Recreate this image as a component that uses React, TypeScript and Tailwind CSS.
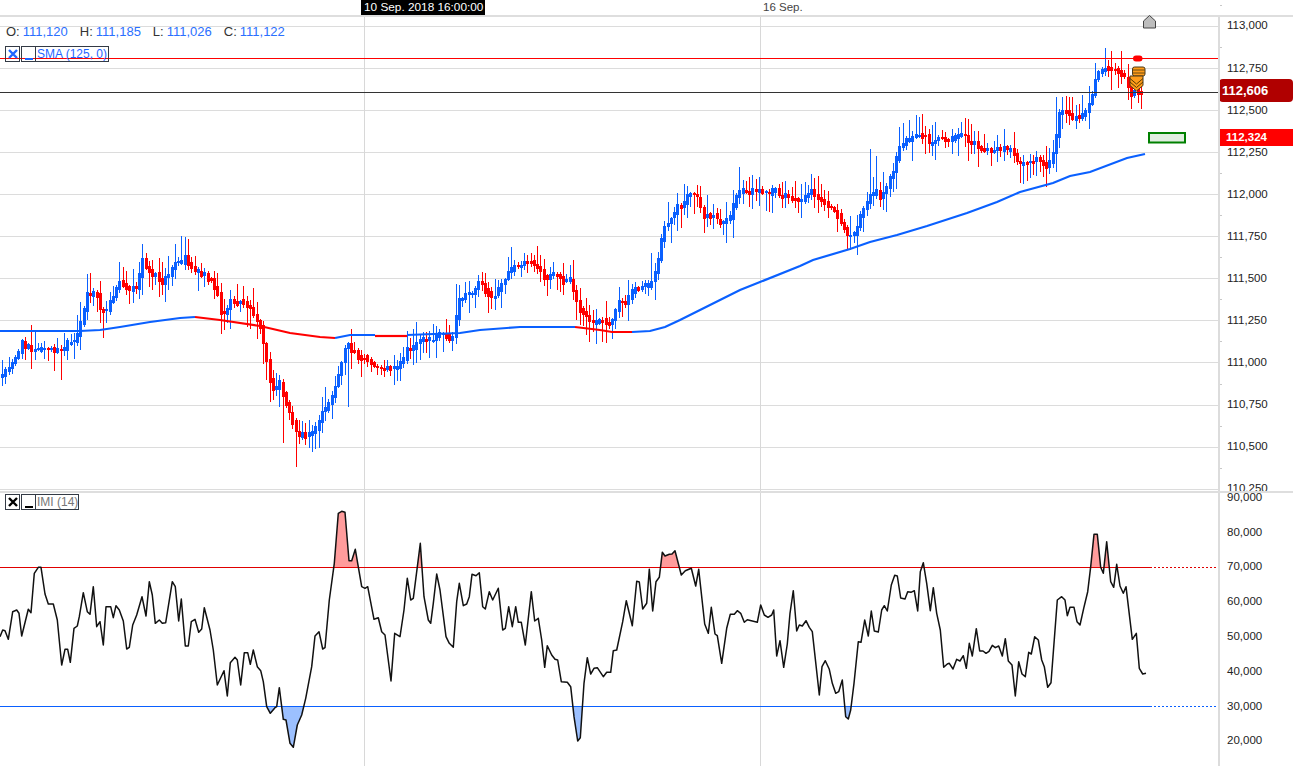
// traced from the chart: [x, y] of the close price in page pixels
const closeTrace: number[] = [
  2,376, 8,368, 15,358, 21,345, 27,344, 33,351, 42,348, 50,350, 62,352, 68,343, 75,343, 82,317, 87,293, 97,295, 100,310, 107,310,
  112,297, 119,283, 127,288, 137,287, 142,262, 147,270, 155,275, 163,283, 173,265, 182,263, 185,257, 192,270, 200,273, 210,278,
  217,293, 222,317, 230,303, 240,302, 248,307, 258,320, 263,343, 267,367, 273,390, 280,383, 287,407, 293,427, 300,436, 308,433,
  315,430, 322,413, 330,402, 337,380, 343,353, 347,347, 353,353, 363,358, 373,367, 383,368, 397,367, 407,350, 413,347, 420,342,
  433,340, 440,333, 453,340, 458,303, 463,297, 472,293, 480,280, 485,290, 493,300, 498,288, 507,275, 513,267, 530,260, 537,268,
  543,278, 553,275, 563,280, 570,279, 575,300, 582,313, 592,323, 600,322, 610,327, 613,320, 617,303, 625,302, 632,293, 638,288,
  648,283, 655,275, 660,247, 663,227, 670,222, 677,207, 683,207, 687,198, 692,192, 698,200, 703,217, 712,215, 722,225, 730,218,
  735,197, 740,192, 747,192, 758,190, 767,195, 775,192, 787,197, 798,202, 810,190, 820,200, 832,210, 842,223, 848,238, 856,230,
  862,210, 870,197, 875,190, 880,200, 885,187, 892,177, 898,147, 905,143, 912,137, 920,133, 930,143, 940,137, 950,140, 963,133,
  970,143, 980,148, 990,152, 1003,147, 1012,150, 1017,163, 1027,165, 1037,157, 1047,167, 1055,147, 1058,113, 1065,113, 1073,118,
  1087,113, 1093,93, 1096,75, 1105,67, 1113,68, 1123,73, 1131,93, 1143,92,
]

// long wicks that stand out: [x, top, bottom], 0 = keep generated
const longWicks: number[][] = [
  [61,0,380],[87,274,0],[103,0,338],[142,244,0],[181,236,0],[185,237,0],[221,0,334],[283,0,443],[296,0,467],[343,322,0],[348,0,407],
  [457,284,0],[508,257,0],[590,0,342],[650,253,0],[654,0,300],[668,202,0],[740,167,0],[848,0,250],[871,149,0],[875,156,0],
  [1047,0,187],[1057,97,0],[1061,97,0],[1106,48,0],[1110,51,0],[1132,0,109],[1136,0,107],
]

const sma: { color: string; pts: string }[] = [
  { color: '#0a60ff', pts: '0,331 80,331 100,330 120,327 150,322 180,318 195,317' },
  { color: '#ff0000', pts: '195,317 220,320 260,326 290,333 320,337 335,338' },
  { color: '#0a60ff', pts: '335,338 350,335 375,335' },
  { color: '#ff0000', pts: '375,336 407,336' },
  { color: '#0a60ff', pts: '407,335 460,333 480,330 520,327 575,327' },
  { color: '#ff0000', pts: '575,327 600,330 612,332 632,332' },
  { color: '#0a60ff', pts: '632,332 650,331 665,327 680,320 700,310 740,290 760,282 800,266 813,260 850,249 870,242 897,235 927,226 967,213 997,202 1020,192 1053,183 1070,176 1090,172 1127,158 1145,154' },
]

// IMI line, read from three 3x crops: [zoomed x, zoomed y] pairs
const imiA = [0,470,8,450,15,452,25,478,38,395,50,390,57,400,65,468,85,388,93,398,103,280,115,262,123,262,135,342,145,372,160,372,172,420,185,555,195,508,203,508,211,547,222,445,232,438,238,410,250,338,262,395,270,403,280,320,290,440,300,425,310,495,318,380,332,380,340,413,348,377,358,390,370,423,380,507,388,502,398,435,410,405,426,350,438,408,448,305,457,345,466,430,478,420,487,430,497,428,517,305,526,320,536,423,544,357,556,498,565,498,574,425,585,418,596,457,605,447,613,383,630,450,640,510,652,615,672,572,682,648,691,548,705,532,712,540,722,615,733,518,743,518,751,553,760,510,772,560,782,572,790,605,800,680,811,700,825,683,830,680,838,623,850,718,858,720,870,790,880,802,892,735,905,705,917,655,935,560,945,468,957,455,968,507,975,503,988,360,1003,250,1015,100,1025,94,1035,97,1047,242,1055,242,1066,208,1085,320,1095,325,1103,320,1122,418,1135,413,1145,455,1155,465,1173,603,1184,460,1200,470,1212,390,1222,295,1232,360,1240,355,1261,190,1272,350,1285,420,1292,430,1300,370,1310,282]
const imiB = [30,330,48,470,58,490,70,502,80,365,88,310,100,377,110,372,118,350,126,283,138,287,148,278,158,380,166,387,178,335,188,360,205,325,218,450,226,445,236,380,247,440,257,380,265,427,274,427,286,495,304,335,314,423,325,415,335,480,344,562,352,497,365,525,375,538,383,540,394,605,412,607,422,620,432,710,443,783,451,773,462,610,472,533,482,582,492,565,502,563,520,590,530,577,542,577,550,512,560,510,578,425,589,362,607,437,620,304,628,306,638,387,650,370,658,268,668,393,678,305,688,292,697,217,705,228,718,223,726,222,735,212,754,285,766,272,784,265,797,318,806,268,824,432,835,460,844,382,855,462,862,467,875,550,890,445,901,403,913,403,922,392,932,400,943,427,952,419,982,427,992,375,1003,405,1014,412,1025,405,1031,390,1040,528,1050,482,1061,562,1072,492,1080,400,1090,332,1100,453,1108,435,1117,438,1128,422,1138,442,1147,455,1168,645,1176,560,1186,542,1198,568,1207,610,1217,640,1226,635,1237,600,1247,710,1255,717,1262,690,1272,610,1285,485]
const imiC = [3,487,14,420,25,468,34,393,43,453,55,456,65,390,73,377,82,393,94,315,104,286,112,288,122,354,135,357,143,335,153,337,163,332,173,393,181,275,190,248,200,310,211,392,220,323,230,400,241,450,251,562,262,552,268,550,279,567,290,538,300,543,310,527,319,565,328,490,337,528,349,446,359,513,369,513,378,520,387,514,397,496,406,503,416,498,427,528,436,476,445,543,456,555,466,648,476,545,486,582,496,590,506,517,514,522,524,470,535,480,545,540,553,560,563,622,573,608,592,360,605,350,615,360,622,407,630,382,642,382,651,425,660,435,671,385,683,335,692,260,702,163,712,163,722,262,730,280,740,185,752,305,761,322,770,253,780,318,790,340,798,320,817,478,829,460,838,565,848,582,858,580]

function unzoom(list: number[], left: number) {
  const out: [number, number][] = []
  for (let i = 0; i < list.length; i += 2) {
    out.push([left + list[i] / 3, 480 + list[i + 1] / 3])
  }
  return out
}

const imiPts = [...unzoom(imiA, 0), ...unzoom(imiB, 430), ...unzoom(imiC, 860)]
const imiLine = imiPts.map(([x, y]) => `${x.toFixed(1)},${y.toFixed(1)}`).join(' ')
const imiArea = (base: number) =>
  `0,${base} ${imiLine} ${imiPts[imiPts.length - 1][0].toFixed(1)},${base}`

function rnd(i: number) {
  const v = Math.sin(i * 12.9898 + 4.1) * 43758.5453
  return v - Math.floor(v)
}

function closeAt(x: number) {
  for (let i = 0; i < closeTrace.length - 2; i += 2) {
    const x0 = closeTrace[i]
    const x1 = closeTrace[i + 2]
    if (x <= x1) {
      const t = Math.max(0, (x - x0) / (x1 - x0))
      return closeTrace[i + 1] + (closeTrace[i + 3] - closeTrace[i + 1]) * t
    }
  }
  return closeTrace[closeTrace.length - 1]
}

type Candle = { x: number; top: number; bottom: number; high: number; low: number; up: boolean }

function buildCandles() {
  const out: Candle[] = []
  let prev = 376
  for (let i = 0; i < 350; i++) {
    const x = Math.round(2 + i * 3.263)
    const close = closeAt(x) + (rnd(i) - 0.5) * 4
    const top = Math.min(prev, close) - rnd(i + 300) * 3
    const bottom = Math.max(prev, close) + rnd(i + 400) * 3
    let high = top - 1 - Math.pow(rnd(i + 500), 1.6) * 19
    let low = bottom + 1 + Math.pow(rnd(i + 700), 1.6) * 19
    for (const [wx, wt, wb] of longWicks) {
      if (Math.abs(wx - x) <= 1) {
        if (wt) high = wt
        if (wb) low = wb
      }
    }
    out.push({ x, top, bottom: Math.max(bottom, top + 2), high, low, up: close < prev })
    prev = close
  }
  return out
}

const candles = buildCandles()
const gridYs = [26, 68, 110, 152, 194, 236, 278, 320, 362, 405, 447, 489]

const priceLabels = ['113,000', '112,750', '112,500', '112,250', '112,000', '111,750', '111,500', '111,250', '111,000', '110,750', '110,500', '110,250']
const imiLabels = ['90,000', '80,000', '70,000', '60,000', '50,000', '40,000', '30,000', '20,000']

function PriceChart() {
  return (
    <svg width="1218" height="474" viewBox="0 17 1218 474" className="block overflow-visible">
      {gridYs.map((y) => (
        <rect key={y} x="0" y={y} width="1218" height="1" fill="#dcdcdc" />
      ))}
      <rect x="364" y="17" width="1" height="474" fill="#d8d8d8" />
      <rect x="760" y="17" width="1" height="474" fill="#d8d8d8" />
      {gridYs.map((y) => (
        <rect key={`t${y}`} x="1220" y={y - 21} width="2" height="1" fill="#c8c8c8" />
      ))}
      <g shapeRendering="crispEdges">
        {candles.map((c) => (
          <g key={c.x} fill={c.up ? '#0a60ff' : '#ff0000'}>
            <rect x={c.x} y={c.high} width="1" height={c.low - c.high} />
            <rect x={c.x - 1} y={c.top} width="3" height={c.bottom - c.top} />
          </g>
        ))}
      </g>
      {sma.map((s) => (
        <polyline key={s.pts} points={s.pts} fill="none" stroke={s.color} strokeWidth="2.2" />
      ))}
      <rect x="0" y="58" width="1218" height="1" fill="#ff0000" />
      <rect x="0" y="92" width="1218" height="1" fill="#333333" />
      {/* order markers */}
      <path d="M1143.5 28V21L1149.5 15.5L1155.5 21V28Z" fill="#bdbdbd" stroke="#444" />
      <rect x="1133" y="55.5" width="9.5" height="6" rx="3" fill="#ff0000" />
      <rect x="1132.5" y="67" width="12.5" height="9" rx="2" fill="#ff9c1a" stroke="#4a3a1a" />
      <path d="M1133 70H1145M1133 73H1145" stroke="#6b4a10" />
      <path d="M1130 76H1143V85.5L1136.5 91L1130 85.5Z" fill="#ff9c1a" stroke="#4a3a1a" />
      <path d="M1130 78.5L1136.5 84L1143 78.5M1130 82L1136.5 87.5L1143 82" fill="none" stroke="#5a3a00" />
      <rect x="1149" y="133" width="36" height="9.5" fill="#e0eee0" stroke="#008000" strokeWidth="2" />
    </svg>
  )
}

function ImiChart() {
  return (
    <svg width="1218" height="273" viewBox="0 493 1218 273" className="block">
      <defs>
        <clipPath id="over">
          <rect x="0" y="480" width="1218" height="87.5" />
        </clipPath>
        <clipPath id="under">
          <rect x="0" y="706.5" width="1218" height="60" />
        </clipPath>
      </defs>
      <rect x="364" y="493" width="1" height="273" fill="#d8d8d8" />
      <rect x="760" y="493" width="1" height="273" fill="#d8d8d8" />
      <polygon points={imiArea(567.5)} fill="#ff9c9c" clipPath="url(#over)" />
      <polygon points={imiArea(706.5)} fill="#9cc0ff" clipPath="url(#under)" />
      <line x1="0" y1="567.5" x2="1150" y2="567.5" stroke="#e00000" />
      <line x1="1150" y1="567.5" x2="1217" y2="567.5" stroke="#e00000" strokeDasharray="2 2" />
      <line x1="0" y1="706.5" x2="1150" y2="706.5" stroke="#0a60ff" />
      <line x1="1150" y1="706.5" x2="1217" y2="706.5" stroke="#0a60ff" strokeDasharray="2 2" />
      <polyline points={imiLine} fill="none" stroke="#111111" strokeWidth="1.5" strokeLinejoin="round" />
    </svg>
  )
}

function Ohlc({ label, value }: { label: string; value: string }) {
  return (
    <span className="flex gap-[3px]">
      <span className="text-[#333]">{label}</span>
      <span className="text-[#2a6fff]">{value}</span>
    </span>
  )
}

function LegendBoxes({ text, tone, width }: { text: string; tone: string; width: string }) {
  return (
    <div className="flex items-stretch h-4 text-xs leading-none">
      <div className={`w-[15px] border border-[#333a45] flex items-center justify-center ${tone}`}>
        <svg width="10" height="10" viewBox="0 0 10 10">
          <path d="M1 1L9 9M9 1L1 9" stroke="currentColor" strokeWidth="2.4" />
        </svg>
      </div>
      <div className={`w-[15px] ml-[1px] border border-[#333a45] flex items-end justify-center pb-[1px] ${tone}`}>
        <div className="w-2 h-[2px] bg-current" />
      </div>
      <div className={`${width} -ml-[1px] border border-[#333a45] flex items-center pl-[1px] whitespace-nowrap ${tone === 'text-black' ? 'text-[#777]' : tone}`}>
        {text}
      </div>
    </div>
  )
}

export default function App() {
  return (
    <div className="w-[1293px] h-[772px] bg-white overflow-hidden font-['Liberation_Sans',sans-serif]">
      <div className="h-[15px] flex items-center text-[11.5px]">
        <div className="ml-[361px] w-[124px] h-full bg-black text-white text-[11.8px] flex items-center pl-[3px] whitespace-nowrap">
          10 Sep. 2018 16:00:00
        </div>
        <div className="ml-[278px] text-[#444]">16 Sep.</div>
      </div>

      <div className="h-[2px] bg-[#dedede]" />

      <div className="h-[474px] flex">
        <div className="w-[1218px] relative">
          <PriceChart />
          <div className="absolute left-[6px] top-[7px] flex gap-3 text-[13px] leading-4">
            <Ohlc label="O:" value="111,120" />
            <Ohlc label="H:" value="111,185" />
            <Ohlc label="L:" value="111,026" />
            <Ohlc label="C:" value="111,122" />
          </div>
          <div className="absolute left-[5px] top-[29px]">
            <LegendBoxes text="SMA (125, 0)" tone="text-[#1f66ff]" width="w-[74px]" />
          </div>
        </div>
        <div className="w-[75px] border-l-2 border-[#dcdcdc] relative overflow-hidden">
          <div className="-mt-[12px] text-[11.5px] text-[#222]">
            {priceLabels.map((p) => (
              <div key={p} className="h-[42.1px] flex items-center pl-[7px]">{p}</div>
            ))}
          </div>
          <div className="absolute left-[-1px] top-[62px] w-[74px] h-[23px] bg-[#b00000] rounded text-white font-bold text-[13px] flex items-center pl-[3px]">
            112,606
          </div>
          <div className="absolute left-[-1px] top-[112px] w-[74px] h-[17px] bg-[#ff0000] text-white font-bold text-[11.5px] flex items-center pl-[7px]">
            112,324
          </div>
        </div>
      </div>

      <div className="h-[2px] bg-[#dedede] relative z-10" />

      <div className="h-[274px] flex">
        <div className="w-[1218px] relative">
          <ImiChart />
          <div className="absolute left-[5px] top-[1px]">
            <LegendBoxes text="IMI (14)" tone="text-black" width="w-[44px]" />
          </div>
        </div>
        <div className="w-[75px] h-[273px] border-l-2 border-[#dcdcdc] relative z-20">
          <div className="-mt-[13px] text-[11.5px] text-[#222]">
            {imiLabels.map((p) => (
              <div key={p} className="h-[34.8px] flex items-center pl-[7px]">{p}</div>
            ))}
          </div>
        </div>
      </div>
    </div>
  )
}
